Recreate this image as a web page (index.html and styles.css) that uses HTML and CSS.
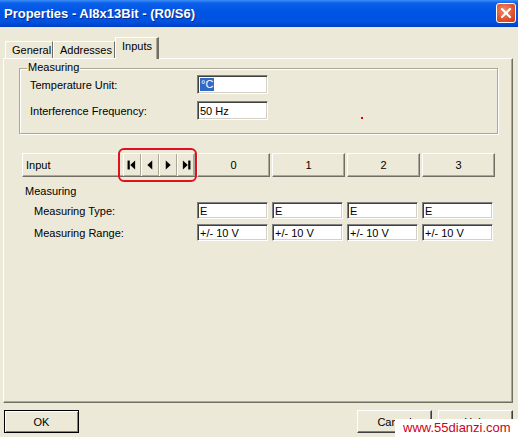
FILE: index.html
```html
<!DOCTYPE html>
<html>
<head>
<meta charset="utf-8">
<link rel="stylesheet" href="styles.css">
</head>
<body>
<div class="window">
  <div class="titlebar">
    <span class="title">Properties - AI8x13Bit - (R0/S6)</span>
    <span class="close"><svg width="12" height="12" viewBox="0 0 12 12"><path d="M2 2 L10 10 M10 2 L2 10" stroke="#fff" stroke-width="2.2" stroke-linecap="round"/></svg></span>
  </div>
  <div class="content">
    <div class="tabs">
      <div class="tab t-general">General</div>
      <div class="tab t-addr">Addresses</div>
      <div class="tab active">Inputs</div>
    </div>
    <div class="panel">
      <div class="group">
        <span class="group-label">Measuring</span>
        <div class="row">
          <span class="lbl">Temperature Unit:</span>
          <span class="field"><span class="sel">°C</span></span>
        </div>
        <div class="row">
          <span class="lbl">Interference Frequency:</span>
          <span class="field">50 Hz</span>
        </div>
        <span class="dot"></span>
      </div>

      <div class="table">
        <div class="hcell hfirst">Input
          <div class="nav">
            <span class="navbtn"><svg width="18" height="22" viewBox="0 0 18 22"><rect x="4" y="6" width="2.5" height="10" fill="#000"/><path d="M12.5 6 L7 11 L12.5 16 Z" fill="#000"/></svg></span>
            <span class="navbtn"><svg width="18" height="22" viewBox="0 0 18 22"><path d="M11.5 6 L6 11 L11.5 16 Z" fill="#000"/></svg></span>
            <span class="navbtn"><svg width="18" height="22" viewBox="0 0 18 22"><path d="M6.5 6 L12 11 L6.5 16 Z" fill="#000"/></svg></span>
            <span class="navbtn"><svg width="18" height="22" viewBox="0 0 18 22"><path d="M5.5 6 L11 11 L5.5 16 Z" fill="#000"/><rect x="11.5" y="6" width="2.5" height="10" fill="#000"/></svg></span>
          </div>
        </div>
        <div class="hcell">0</div>
        <div class="hcell">1</div>
        <div class="hcell">2</div>
        <div class="hcell">3</div>

        <div class="sect">Measuring</div>

        <div class="rlbl">Measuring Type:</div>
        <div class="cell"><span class="field small">E</span></div>
        <div class="cell"><span class="field small">E</span></div>
        <div class="cell"><span class="field small">E</span></div>
        <div class="cell"><span class="field small">E</span></div>

        <div class="rlbl">Measuring Range:</div>
        <div class="cell"><span class="field small">+/- 10 V</span></div>
        <div class="cell"><span class="field small">+/- 10 V</span></div>
        <div class="cell"><span class="field small">+/- 10 V</span></div>
        <div class="cell"><span class="field small">+/- 10 V</span></div>

        <span class="mark"></span>
      </div>
    </div>
    <div class="buttons">
      <span class="btn default">OK</span>
      <span class="right">
        <span class="btn">Cancel</span>
        <span class="btn">Help</span>
      </span>
    </div>
  </div>
  <div class="watermark">www.55dianzi.com</div>
</div>
</body>
</html>
```
FILE: styles.css
```css
html, body {
  margin: 0;
  padding: 0;
}
body {
  font-family: "Liberation Sans", Arial, sans-serif;
  font-size: 11px;
  color: #000;
  background: #ECE9D8;
}
.window {
  position: relative;
  width: 518px;
  height: 437px;
  overflow: hidden;
  background: #ECE9D8;
}
.titlebar {
  height: 27px;
  box-sizing: border-box;
  display: flex;
  align-items: center;
  justify-content: space-between;
  padding: 0 2px 0 4px;
  background: linear-gradient(#3d8ef7 0px, #0b61ea 3px, #0055e5 40%, #0052e0 80%, #0044cc 96%, #003aba 100%);
}
.title {
  color: #fff;
  font-family: "Liberation Sans", Arial, sans-serif;
  font-weight: bold;
  font-size: 13px;
  text-shadow: 1px 1px 0 #0a2a8a;
  margin-top: -1px;
}
.close {
  width: 20px;
  height: 20px;
  box-sizing: border-box;
  border: 1px solid #fff;
  border-radius: 3px;
  background: radial-gradient(circle at 40% 35%, #f28b68, #e0502d 60%, #c43a1c);
  display: flex;
  align-items: center;
  justify-content: center;
  margin-top: -2px;
}
.content {
  padding: 10px 5px 0 3px;
}
.tabs {
  display: flex;
  align-items: flex-end;
  height: 21px;
  padding-left: 2px;
  position: relative;
  z-index: 1;
}
.tab {
  height: 17px;
  box-sizing: border-box;
  padding: 2px 5px 0 6px;
  border-top: 1px solid #fff;
  border-left: 1px solid #fff;
  border-right: 1px solid #716f64;
  background: #ECE9D8;
}
.t-general { width: 48px; }
.t-addr { width: 62px; }
.tab.active {
  height: 22px;
  width: 44px;
  margin-bottom: -1px;
  padding-top: 2px;
  border-right: 2px solid #716f64;
  box-shadow: inset -1px 0 #aca899;
}
.panel {
  height: 345px;
  box-sizing: border-box;
  border-top: 1px solid #fff;
  border-left: 1px solid #fff;
  border-right: 1px solid #716f64;
  border-bottom: 1px solid #716f64;
  box-shadow: inset -1px -1px #aca899;
  padding: 9px 0 0 15px;
}
.group {
  position: relative;
  width: 479px;
  height: 66px;
  box-sizing: border-box;
  border: 1px solid #aca899;
  box-shadow: inset 1px 1px #fff, 1px 1px #fff;
  padding: 6px 0 0 10px;
}
.group-label {
  position: absolute;
  left: 7px;
  top: -8px;
  padding: 0 1px;
  background: #ECE9D8;
  line-height: 13px;
}
.row {
  display: flex;
  align-items: center;
  height: 19px;
  margin-bottom: 7px;
}
.lbl {
  width: 167px;
}
.field {
  display: inline-flex;
  align-items: center;
  width: 71px;
  height: 19px;
  box-sizing: border-box;
  background: #fff;
  border: 1px solid;
  border-color: #808080 #fff #fff #808080;
  box-shadow: inset 1px 1px #404040, inset -1px -1px #d4d0c8;
  padding-left: 2px;
  white-space: nowrap;
}
.field.small {
  height: 17px;
}
.sel {
  background: #316ac5;
  color: #fff;
  padding: 0 1px;
  line-height: 13px;
}
.dot {
  position: absolute;
  left: 341px;
  top: 48px;
  width: 2px;
  height: 2px;
  background: #d00;
}
.table {
  position: relative;
  margin: 19px 0 0 3px;
  display: grid;
  grid-template-columns: 173px repeat(4, 73px);
  column-gap: 2px;
}
.hcell {
  position: relative;
  height: 24px;
  box-sizing: border-box;
  border: 1px solid;
  border-color: #fff #716f64 #716f64 #fff;
  box-shadow: inset -1px -1px #aca899;
  display: flex;
  align-items: center;
  justify-content: center;
}
.hcell.hfirst {
  justify-content: flex-start;
  padding-left: 3px;
}
.nav {
  position: absolute;
  left: 100px;
  top: 0;
  bottom: 0;
  display: flex;
}
.navbtn {
  width: 18px;
  height: 22px;
  box-sizing: border-box;
  border-left: 1px solid #fff;
  border-right: 1px solid #aca899;
  display: flex;
}
.sect {
  grid-column: 1 / -1;
  margin: 8px 0 4px 3px;
  line-height: 13px;
}
.rlbl {
  padding-left: 12px;
  display: flex;
  align-items: center;
  height: 17px;
  margin-bottom: 5px;
}
.cell {
  height: 17px;
  margin-bottom: 5px;
}
.mark {
  position: absolute;
  left: 96px;
  top: -5px;
  width: 79px;
  height: 34px;
  box-sizing: border-box;
  border: 2px solid #e0101e;
  border-radius: 6px;
}
.buttons {
  display: flex;
  justify-content: space-between;
  margin-top: 7px;
  padding-left: 1px;
}
.right {
  display: flex;
  gap: 6px;
}
.btn {
  width: 75px;
  height: 23px;
  box-sizing: border-box;
  display: flex;
  align-items: center;
  justify-content: center;
  border: 1px solid;
  border-color: #fff #404040 #404040 #fff;
  box-shadow: inset -1px -1px #808080;
}
.btn.default {
  border: 1px solid #000;
  box-shadow: inset 1px 1px #fff, inset -1px -1px #808080;
}
.watermark {
  position: absolute;
  left: 395px;
  top: 419px;
  width: 123px;
  height: 18px;
  background: #fff;
  color: #d00018;
  font-family: "Liberation Sans", Arial, sans-serif;
  font-size: 13px;
  line-height: 18px;
  padding-left: 8px;
  box-sizing: border-box;
  white-space: nowrap;
}
```
